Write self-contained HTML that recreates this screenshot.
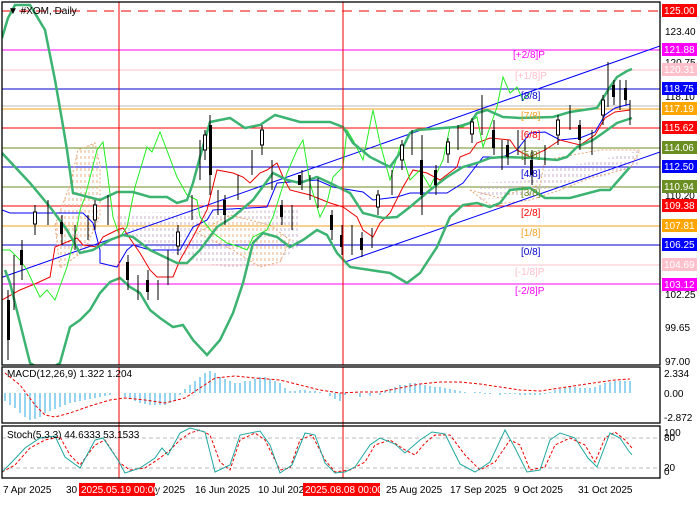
<!DOCTYPE html>
<html><head><meta charset="utf-8"><style>
body{margin:0;background:#fff;width:700px;height:500px;overflow:hidden;font-family:"Liberation Sans",sans-serif}
svg text{font-family:"Liberation Sans",sans-serif;font-size:10px}
</style></head><body>
<svg width="700" height="500" viewBox="0 0 700 500" xmlns="http://www.w3.org/2000/svg">
<defs>
<pattern id="hat" width="4" height="6" patternUnits="userSpaceOnUse"><line x1="1" y1="0" x2="1" y2="3" stroke="#c8b0c8" stroke-width="1"/></pattern>
<pattern id="hato" width="4" height="6" patternUnits="userSpaceOnUse"><line x1="1" y1="0" x2="1" y2="3" stroke="#e8b08a" stroke-width="1"/></pattern>
<clipPath id="mc"><rect x="2" y="2" width="658" height="363"/></clipPath>
</defs>
<rect width="700" height="500" fill="#fff"/>
<g clip-path="url(#mc)">
<!-- murrey lines -->
<line x1="2" y1="11" x2="660" y2="11" stroke="#e00" stroke-dasharray="10,7"/>
<line x1="2" y1="50" x2="660" y2="50" stroke="#f0f"/>
<line x1="2" y1="70" x2="660" y2="70" stroke="#ffc0cb"/>
<line x1="2" y1="89" x2="660" y2="89" stroke="#00c"/>
<line x1="2" y1="106" x2="660" y2="106" stroke="#bbb"/>
<line x1="2" y1="109" x2="660" y2="109" stroke="#f0a020"/>
<line x1="2" y1="128" x2="660" y2="128" stroke="#f00"/>
<line x1="2" y1="148" x2="660" y2="148" stroke="#6b8e23"/>
<line x1="2" y1="167" x2="660" y2="167" stroke="#00c"/>
<line x1="2" y1="187" x2="660" y2="187" stroke="#6b8e23"/>
<line x1="2" y1="206" x2="660" y2="206" stroke="#f00"/>
<line x1="2" y1="226" x2="660" y2="226" stroke="#f0a020"/>
<line x1="2" y1="245" x2="660" y2="245" stroke="#00c"/>
<line x1="2" y1="265" x2="660" y2="265" stroke="#ffc0cb"/>
<line x1="2" y1="284" x2="660" y2="284" stroke="#f0f"/>
<!-- cloud -->
<path d="M117 213 L300 210 L300 245 L280 262 L230 268 L200 262 L170 252 L140 240 L117 235Z" fill="url(#hat)"/>
<path d="M480 183 L530 180 L545 170 L600 160 L640 150 L640 165 L600 178 L560 185 L530 195 L480 200Z" fill="url(#hat)"/>
<g fill="url(#hato)" stroke="#e8a878" stroke-dasharray="2,2">
<path d="M55 225 L70 185 L78 150 L95 143 L100 165 L100 215 L85 250 L60 268Z"/>
<path d="M197 233 L233 250 L260 267 L280 262 L290 240 L270 225 L230 215Z"/>
<path d="M470 190 L500 198 L520 190 L540 185 L545 160 L600 150 L640 150 L630 168 L590 178 L560 190 L530 200 L490 205Z" fill="none"/>
</g>
<!-- channel lines -->
<g stroke="#00f" stroke-width="1">
<line x1="0" y1="278" x2="660" y2="46"/>
<line x1="345" y1="262" x2="660" y2="152"/>
</g>
<!-- blue/red MAs -->
<polyline fill="none" stroke="#00f" points="2,210 10,213 83,213 93,223 100,250 100,263 117,267 127,250 133,245 150,250 180,250 193,227 207,220 213,210 267,207 277,183 317,180 333,187 363,192 373,200 397,197 410,193 447,193 463,183 473,170 483,157 503,157 517,150 530,133 545,132 560,140 580,138 595,132 605,115 615,108 630,104"/>
<polyline fill="none" stroke="#e00" points="2,300 20,290 37,283 50,277 55,247 67,242 77,238 83,245 97,247 103,237 117,230 123,228 133,243 140,253 150,270 157,277 173,277 180,260 193,237 207,210 217,170 233,173 243,177 250,183 260,173 267,170 277,163 283,177 290,190 310,195 330,203 343,207 357,217 363,230 373,237 380,223 390,213 403,187 413,170 427,173 440,180 457,167 460,157 470,153 477,143 490,138 510,140 517,150 530,157 545,150 560,140 580,145 595,135 605,118 615,112 630,110"/>
<!-- bright green -->
<polyline fill="none" stroke="#2e2" points="2,250 10,250 20,260 27,270 33,283 40,297 47,290 55,300 67,267 77,227 80,210 85,197 97,150 103,142 107,170 113,217 120,237 127,227 135,187 147,147 152,152 160,132 177,177 187,195 197,200 200,217 213,233 227,243 240,247 247,250 253,237 267,230 273,217 287,173 297,150 303,140 310,183 320,217 327,203 333,177 343,167 347,130 353,140 363,160 373,110 380,143 390,180 400,147 410,180 420,170 430,187 443,160 450,127 463,127 477,117 483,147 490,127 497,107 503,77 510,93 517,87 523,100 530,93"/>
<!-- bollinger -->
<g fill="none" stroke="#3cb371" stroke-width="2.5">
<polyline points="2,38 8,18 15,5 30,5 45,30 55,80 62,120 67,150 73,193 100,200 117,192 133,192 150,197 167,197 177,203 187,200 193,183 200,157 210,122 230,118 245,128 260,125 275,115 300,122 330,122 343,127 353,143 370,157 390,167 400,153 410,133 417,130 443,128 457,127 470,123 477,113 487,110 503,117 520,118 553,117 570,112 597,108 610,87 617,77 627,71 632,69"/>
<polyline points="2,153 30,183 50,207 67,230 80,253 93,250 110,240 123,235 133,237 150,250 177,263 187,263 200,250 217,227 233,217 253,200 273,173 287,180 300,183 317,177 330,183 350,193 363,213 383,218 397,217 410,207 430,190 447,177 463,167 477,163 490,158 503,157 533,158 557,160 567,157 577,147 593,140 603,133 617,123 632,118"/>
<polyline points="5,270 10,283 20,323 30,363 45,372 60,363 70,327 80,320 90,310 100,293 110,282 120,278 130,287 140,293 150,310 160,318 173,327 183,325 193,340 207,355 220,340 233,313 243,283 253,243 263,233 277,237 290,247 303,240 317,230 327,235 337,253 350,267 370,270 390,273 407,283 420,273 437,247 450,217 463,205 477,203 490,207 500,203 510,190 530,188 545,198 570,198 600,190 610,190 630,167"/>
</g>
<!-- candles / price -->
<g stroke="#000" stroke-width="1" fill="none">
<path d="M8 290v70 M14 255v55 M22 240v40 M35 205v30 M48 200v25 M62 215v30 M75 225v25 M88 215v25 M95 200v30 M108 195v30 M128 255v35 M138 275v25 M148 270v30 M158 280v20 M168 250v35 M178 225v30 M192 195v25 M200 140v40 M205 130v30 M210 115v80 M218 190v25 M225 195v30 M238 175v25 M252 150v25 M262 125v30 M272 160v30 M282 200v25 M292 205v25 M302 170v20 M310 175v25 M318 178v30 M332 210v30 M342 225v30 M352 225v30 M362 232v25 M372 228v20 M378 190v25 M392 170v25 M402 140v30 M412 130v25 M422 135v80 M436 165v30 M448 138v25 M458 125v25 M472 118v25 M482 95v40 M494 120v35 M502 140v30 M508 140v25 M518 130v25 M525 140v25 M532 150v35 M545 145v20 M558 115v30 M570 105v25 M580 120v30 M592 130v25 M603 95v30 M608 62v45 M614 80v25 M620 80v30 M626 80v25 M630 100v25"/>
</g>
<g fill="#000">
<rect x="7" y="300" width="3" height="40"/><rect x="20" y="250" width="3" height="15"/><rect x="60" y="222" width="3" height="12"/><rect x="126" y="262" width="3" height="18"/><rect x="146" y="280" width="3" height="12"/><rect x="209" y="125" width="3" height="50"/><rect x="223" y="200" width="3" height="15"/><rect x="280" y="205" width="3" height="12"/><rect x="298" y="175" width="3" height="10"/><rect x="330" y="215" width="3" height="15"/><rect x="340" y="235" width="3" height="12"/><rect x="360" y="238" width="3" height="12"/><rect x="420" y="160" width="3" height="35"/><rect x="434" y="170" width="3" height="15"/><rect x="492" y="130" width="3" height="18"/><rect x="506" y="145" width="3" height="12"/><rect x="530" y="160" width="3" height="15"/><rect x="578" y="125" width="3" height="15"/><rect x="612" y="85" width="3" height="12"/><rect x="624" y="88" width="3" height="12"/>
</g>
<g fill="#fff" stroke="#000">
<rect x="33.5" y="212" width="3" height="12"/><rect x="93.5" y="205" width="3" height="15"/><rect x="176.5" y="232" width="3" height="14"/><rect x="203.5" y="135" width="3" height="15"/><rect x="260.5" y="130" width="3" height="15"/><rect x="376.5" y="195" width="3" height="12"/><rect x="400.5" y="145" width="3" height="15"/><rect x="446.5" y="142" width="3" height="12"/><rect x="470.5" y="122" width="3" height="12"/><rect x="556.5" y="120" width="3" height="15"/><rect x="601.5" y="100" width="3" height="15"/>
</g>
<!-- red verticals -->
<line x1="119" y1="2" x2="119" y2="365" stroke="#e00"/>
<line x1="343" y1="2" x2="343" y2="365" stroke="#e00"/>
<!-- murrey labels -->
<g font-size="10">
<text x="513" y="58" fill="#f0f">[+2/8]P</text>
<text x="515" y="79" fill="#ffc0cb">[+1/8]P</text>
<text x="521" y="99" fill="#00c">[8/8]</text>
<text x="521" y="119" fill="#f0a020">[7/8]</text>
<text x="521" y="138" fill="#f00">[6/8]</text>
<text x="521" y="158" fill="#6b8e23">[5/8]</text>
<text x="521" y="177" fill="#00c">[4/8]</text>
<text x="521" y="196" fill="#6b8e23">[3/8]</text>
<text x="521" y="216" fill="#f00">[2/8]</text>
<text x="521" y="236" fill="#f0a020">[1/8]</text>
<text x="521" y="255" fill="#00c">[0/8]</text>
<text x="515" y="275" fill="#ffc0cb">[-1/8]P</text>
<text x="515" y="294" fill="#f0f">[-2/8]P</text>
</g>
<text x="8" y="14" fill="#000" font-size="10">▼ #XOM, Daily</text>
</g>
<line x1="119" y1="367" x2="119" y2="478" stroke="#e00"/>
<line x1="343" y1="367" x2="343" y2="478" stroke="#e00"/>
<!-- MACD -->
<path stroke="#29a8e0" stroke-width="1" d="M5 393v8 M10 393v12 M15 393v15 M20 393v20 M25 393v24 M30 393v27 M35 393v26 M40 393v24 M45 393v20 M50 393v18 M55 393v16 M60 393v14 M65 393v12 M70 393v10 M75 393v9 M80 393v8 M85 393v7 M90 393v6 M95 393v5 M100 393v4 M105 393v3 M110 393v2 M125 393v4 M130 393v6 M135 393v8 M140 393v10 M145 393v11 M150 393v12 M155 393v12 M160 393v12 M165 393v12 M170 393v10 M175 393v8 M180 393v2 M185 393v-4 M190 393v-8 M195 393v-12 M200 393v-16 M205 393v-20 M210 393v-22 M215 393v-20 M220 393v-16 M225 393v-14 M230 393v-12 M235 393v-10 M240 393v-10 M245 393v-12 M250 393v-12 M255 393v-14 M260 393v-16 M265 393v-16 M270 393v-14 M275 393v-12 M280 393v-10 M285 393v-5 M290 393v-2 M295 393v-2 M300 393v-3 M305 393v-3 M310 393v-2 M315 393v-2 M320 393v-1 M330 393v3 M335 393v6 M340 393v8 M345 393v2 M360 393v4 M370 393v3 M380 393v2 M385 393v-2 M390 393v-4 M395 393v-6 M400 393v-8 M405 393v-8 M410 393v-10 M415 393v-10 M420 393v-9 M425 393v-8 M430 393v-7 M435 393v-6 M440 393v-6 M445 393v-5 M450 393v-4 M455 393v-3 M460 393v-2 M465 393v-1 M475 393v-1 M480 393v-1 M485 393v1 M490 393v1 M500 393v2 M505 393v1 M510 393v1 M515 393v1 M520 393v2 M525 393v2 M530 393v2 M535 393v2 M540 393v2 M545 393v1 M550 393v-1 M555 393v-3 M560 393v-4 M565 393v-5 M570 393v-6 M575 393v-6 M580 393v-5 M585 393v-5 M590 393v-5 M595 393v-6 M600 393v-8 M605 393v-10 M610 393v-11 M615 393v-12 M620 393v-12 M625 393v-12 M630 393v-12"/>
<polyline fill="none" stroke="#e00" stroke-dasharray="3,2" points="5,373 20,385 35,405 45,415 55,417 70,413 90,406 110,400 125,398 145,400 165,403 185,398 200,388 215,378 235,376 255,378 280,380 300,385 320,390 340,393 360,392 380,392 400,388 420,384 440,382 460,382 480,384 500,387 520,390 540,391 560,388 580,385 600,382 615,380 630,379"/>
<text x="7" y="377" fill="#000" font-size="10">MACD(12,26,9) 1.322 1.204</text>
<!-- Stoch -->
<line x1="2" y1="438" x2="660" y2="438" stroke="#bbb" stroke-dasharray="4,3"/>
<line x1="2" y1="468" x2="660" y2="468" stroke="#bbb" stroke-dasharray="4,3"/>
<polyline fill="none" stroke="#e00" stroke-dasharray="3,2" points="2,472 15,465 30,448 45,440 60,437 70,455 80,465 95,445 105,440 120,463 130,470 145,468 160,458 170,450 180,440 190,433 200,430 210,435 220,462 230,470 240,440 255,433 265,440 280,470 290,468 300,440 312,435 325,460 335,472 350,470 365,462 375,445 390,440 405,450 415,455 425,443 435,435 450,435 465,455 480,470 495,462 510,440 520,445 530,470 545,467 555,445 570,438 585,445 595,462 605,438 615,432 625,440 632,448"/>
<polyline fill="none" stroke="#20a8a0" points="2,472 12,462 25,448 40,438 55,436 65,457 80,468 95,440 103,438 118,460 125,473 140,468 155,458 162,448 168,455 180,433 190,428 205,432 215,472 230,465 240,435 260,431 270,445 280,473 292,465 305,433 315,435 325,463 335,473 345,472 355,467 370,445 380,438 395,444 405,453 420,440 432,432 445,434 460,464 475,472 490,462 505,430 515,448 527,472 540,470 550,440 560,433 575,438 588,458 597,467 610,433 620,438 628,450 632,455"/>
<text x="7" y="438" fill="#000" font-size="10">Stoch(5,3,3) 44.6333 53.1533</text>
<!-- frames -->
<g fill="none" stroke="#000" stroke-width="1.3">
<rect x="2" y="2" width="658" height="363"/>
<rect x="2" y="367" width="658" height="56"/>
<rect x="2" y="426" width="658" height="52"/>
</g>
<!-- axis tick labels -->
<g fill="#000" font-size="10">
<text x="665" y="35">123.40</text>
<text x="665" y="66">120.75</text>
<text x="665" y="100">118.10</text>
<text x="665" y="199">110.20</text>
<text x="665" y="298">102.25</text>
<text x="665" y="331">99.65</text>
<text x="665" y="365">97.00</text>
<text x="664" y="377">2.334</text>
<text x="664" y="397">0.00</text>
<text x="664" y="421">-2.872</text>
<text x="664" y="436">100</text>
<text x="664" y="441">80</text>
<text x="664" y="471">20</text>
<text x="664" y="475">0</text>
</g>
<!-- price boxes -->
<g font-size="10">
<rect x="662" y="4" width="35" height="13" fill="#f00"/><text x="664" y="14" fill="#fff">125.00</text>
<rect x="662" y="43" width="35" height="13" fill="#f0f"/><text x="664" y="53" fill="#fff">121.88</text>
<rect x="662" y="63" width="35" height="13" fill="#ffc0cb"/><text x="664" y="73" fill="#fff">120.31</text>
<rect x="662" y="82" width="35" height="13" fill="#00f"/><text x="664" y="92" fill="#fff">118.75</text>
<rect x="662" y="102" width="35" height="13" fill="#ffa500"/><text x="664" y="112" fill="#fff">117.19</text>
<rect x="662" y="121" width="35" height="13" fill="#f00"/><text x="664" y="131" fill="#fff">115.62</text>
<rect x="662" y="141" width="35" height="13" fill="#6b8e23"/><text x="664" y="151" fill="#fff">114.06</text>
<rect x="662" y="160" width="35" height="13" fill="#00f"/><text x="664" y="170" fill="#fff">112.50</text>
<rect x="662" y="180" width="35" height="13" fill="#6b8e23"/><text x="664" y="190" fill="#fff">110.94</text>
<rect x="662" y="199" width="35" height="13" fill="#f00"/><text x="664" y="209" fill="#fff">109.38</text>
<rect x="662" y="219" width="35" height="13" fill="#ffa500"/><text x="664" y="229" fill="#fff">107.81</text>
<rect x="662" y="238" width="35" height="13" fill="#00f"/><text x="664" y="248" fill="#fff">106.25</text>
<rect x="662" y="258" width="35" height="13" fill="#ffc0cb"/><text x="664" y="268" fill="#fff">104.69</text>
<rect x="662" y="278" width="35" height="13" fill="#f0f"/><text x="664" y="288" fill="#fff">103.12</text>
</g>
<!-- date axis -->
<g fill="#000" font-size="10">
<text x="3" y="493">7 Apr 2025</text>
<text x="66" y="493">30</text>
<text x="155" y="493">y 2025</text>
<text x="195" y="493">16 Jun 2025</text>
<text x="258" y="493">10 Jul 2025</text>
<text x="386" y="493">25 Aug 2025</text>
<text x="450" y="493">17 Sep 2025</text>
<text x="514" y="493">9 Oct 2025</text>
<text x="578" y="493">31 Oct 2025</text>
</g>
<rect x="79" y="483" width="76" height="13" fill="#f00"/><text x="81" y="493" fill="#fff" font-size="10">2025.05.19 00:00</text>
<rect x="303" y="483" width="77" height="13" fill="#f00"/><text x="305" y="493" fill="#fff" font-size="10">2025.08.08 00:00</text>
</svg>
</body></html>
